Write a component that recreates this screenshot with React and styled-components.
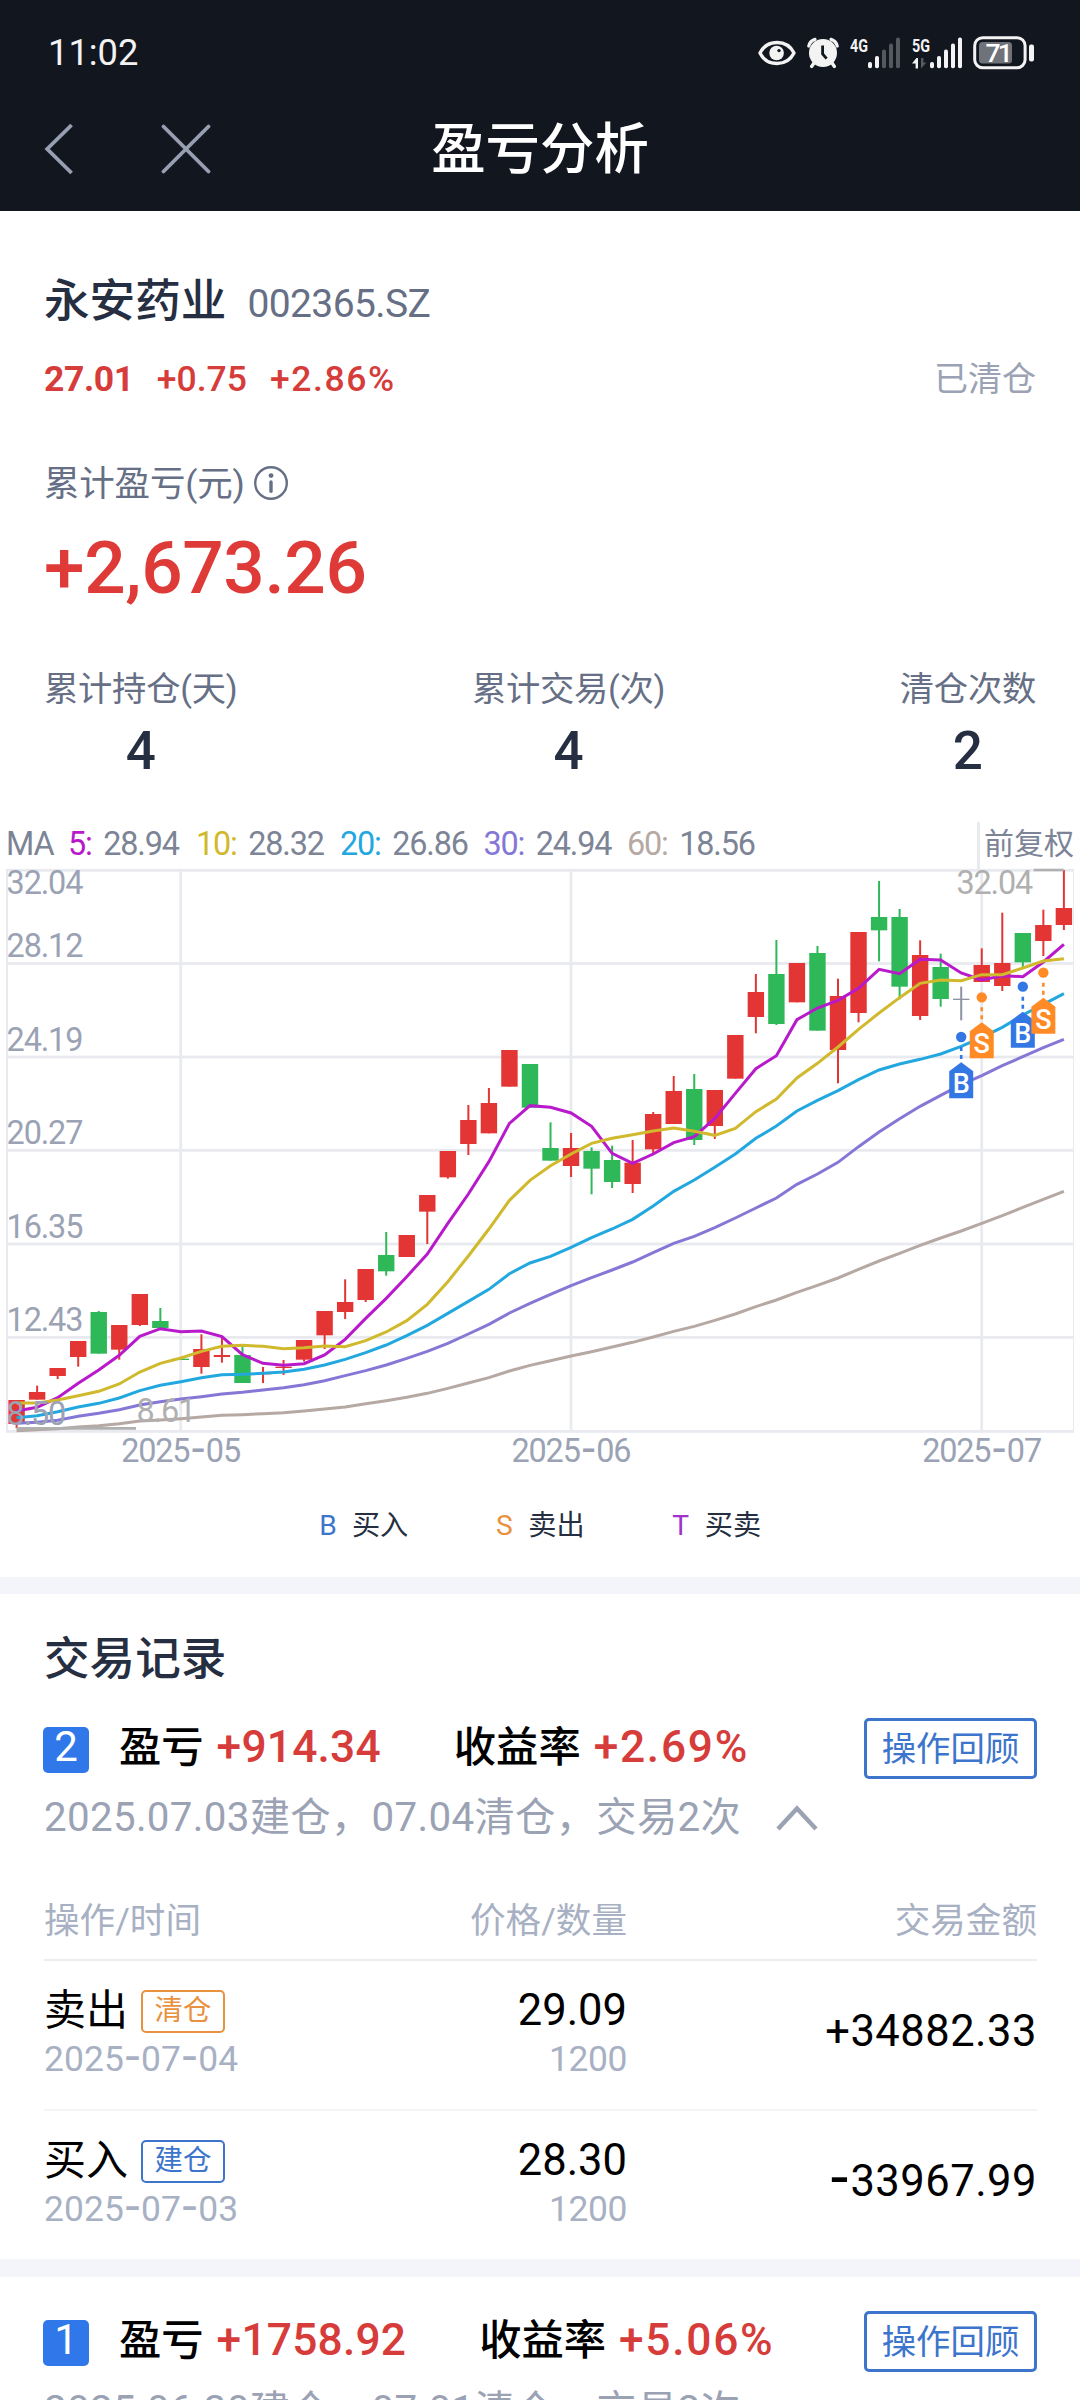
import React from 'react';
import styled, { createGlobalStyle } from 'styled-components';

const C = {
  ink: '#262f42',
  slate: '#666f85',
  mute: '#9aa2b4',
  faint: '#a8b0c3',
  red: '#e33634',
  redText: '#d63c3a',
  green: '#2fb858',
  blue: '#3078ea',
  blueText: '#3c75cb',
  orange: '#ff8a26',
  grid: '#e9eaf0',
  band: '#f4f5fa',
  ma5: '#b81acb',
  ma10: '#d0b92c',
  ma20: '#22a8df',
  ma30: '#8577d6',
  ma60: '#b6a8a2',
};

const FONT = `Roboto, 'Noto Sans CJK SC', sans-serif`;

const Global = createGlobalStyle`
  * { box-sizing: border-box; }
  body { margin: 0; background: #fff; font-family: ${FONT}; line-height: 1.2; }
`;

const Page = styled.div`
  width: 1080px;
  height: 2400px;
  overflow: hidden;
  background: #fff;
  white-space: nowrap;
`;

const Text = styled.span`
  font-size: ${(p) => p.$size}px;
  font-weight: ${(p) => p.$weight || 400};
  letter-spacing: ${(p) => p.$ls || 0}px;
  color: ${(p) => p.$color || '#000'};
`;

/* ---------- header ---------- */

const Header = styled.header`
  height: 211px;
  background: #12161f;
`;

const StatusBar = styled.div`
  display: flex;
  align-items: center;
  justify-content: space-between;
  height: 105px;
  padding: 0 45px 0 48px;
`;

const StatusIcons = styled.div`
  display: flex;
  align-items: center;
  gap: 11.3px;
`;

const NavBar = styled.nav`
  display: grid;
  grid-template-columns: 1fr auto 1fr;
  align-items: center;
  height: 87px;
  padding: 0 43px;
`;

const NavTitle = styled.h1`
  margin: 2px 0 0;
  font-size: 54.4px;
  font-weight: 500;
  color: #fff;
`;

const NavButtons = styled.div`
  display: flex;
  align-items: center;
  gap: 88px;
`;

const Eye = () => (
  <svg width="38" height="26" viewBox="0 0 38 26">
    <path d="M2 13C9 -1 29 -1 36 13C29 27 9 27 2 13Z" fill="none" stroke="#f3f3f3" strokeWidth="3.4" strokeLinejoin="round" />
    <circle cx="18.6" cy="13" r="7.3" fill="#f3f3f3" />
    <circle cx="21" cy="10.6" r="1.7" fill="#12161f" />
  </svg>
);

const Alarm = () => (
  <svg width="32" height="32" viewBox="0 0 32 32">
    <g stroke="#f3f3f3" strokeLinecap="round" fill="none">
      <path d="M1.8 9A9 9 0 0 1 8 2.4M30.2 9A9 9 0 0 0 24 2.4" strokeWidth="3.2" />
      <path d="M7 26L4.6 29.4M25 26L27.4 29.4" strokeWidth="3.4" />
    </g>
    <circle cx="16" cy="16" r="14" fill="#f3f3f3" />
    <path d="M15.6 8.4V17L19.6 21.6" fill="none" stroke="#12161f" strokeWidth="2.8" />
  </svg>
);

const Signal = ({ label, on, arrows }) => (
  <svg width="50" height="44" viewBox="0 -6 50 44">
    <text x="0" y="14.6" fontFamily="Roboto" fontWeight="700" fontSize="19" fill="#f3f3f3" textLength="18" lengthAdjust="spacingAndGlyphs">
      {label}
    </text>
    {arrows && <path d="M0 26.4L4.4 21H6V31.4H3.6V26.4Z" fill="#f3f3f3" />}
    {arrows && <path d="M9 21V31.4L14.4 25.4H11.4V21Z" fill="#55585f" />}
    {[25, 19, 12.6, 6.4, 0.4].map((y, i) => (
      <rect key={y} x={18 + 7 * i} y={y} width="4" height={31.3 - y} rx="1.8" fill={i < on ? '#f3f3f3' : '#55585f'} />
    ))}
  </svg>
);

const Battery = () => (
  <svg width="62" height="34" viewBox="0 0 62 34">
    <rect x="1.7" y="1.7" width="50.4" height="30" rx="8" fill="none" stroke="#f3f3f3" strokeWidth="3" />
    <rect x="6" y="6" width="33" height="21.4" rx="3.5" fill="#6f7278" />
    <rect x="56" y="8.4" width="5" height="17" rx="2" fill="#f3f3f3" />
    <text x="12.4" y="25.8" fontFamily="Roboto" fontWeight="500" fontSize="26.5" fill="#fff" letterSpacing="-2.6">71</text>
  </svg>
);

const Back = () => (
  <svg width="30" height="52" viewBox="0 0 30 52">
    <path d="M28.6 2L4.2 26L28.6 50" fill="none" stroke="#979fb3" strokeWidth="3.8" />
  </svg>
);

const Close = () => (
  <svg width="50" height="50" viewBox="0 0 50 50">
    <path d="M2.5 2.5L47.5 47.5M47.5 2.5L2.5 47.5" fill="none" stroke="#979fb3" strokeWidth="3.8" strokeLinecap="round" />
  </svg>
);

/* ---------- summary ---------- */

const Summary = styled.section`
  padding: 61px 44px 0 44px;
`;

const NameRow = styled.div`
  display: flex;
  align-items: baseline;
  gap: 21px;
  height: 60px;
  line-height: 60px;
`;

const PriceRow = styled.div`
  display: flex;
  align-items: center;
  gap: 23px;
  height: 50px;
  margin-top: 22px;
`;

const Status = styled(Text)`
  margin-left: auto;
`;

const LabelRow = styled.div`
  display: flex;
  align-items: center;
  gap: 8px;
  height: 50px;
  margin-top: 55px;
`;

const BigNumber = styled.div`
  height: 80px;
  margin-top: 18px;
  line-height: 82px;
  font-size: 73px;
  font-weight: 500;
  letter-spacing: -0.4px;
  color: #de3a37;
`;

const Stats = styled.div`
  display: flex;
  justify-content: space-between;
  margin-top: 60px;
`;

const Stat = styled.div`
  display: flex;
  flex-direction: column;
  align-items: center;
  gap: 9px;
`;

const StatLabel = styled(Text)`
  line-height: 44px;
`;

const StatValue = styled(Text)`
  line-height: 62px;
  height: 60px;
`;

const InfoIcon = () => (
  <svg width="36" height="36" viewBox="0 0 36 36">
    <circle cx="18" cy="17" r="15.8" fill="none" stroke={C.slate} strokeWidth="2.4" />
    <circle cx="18" cy="9.6" r="2.4" fill={C.slate} />
    <path d="M18 16V25.2" stroke={C.slate} strokeWidth="3.4" strokeLinecap="round" />
  </svg>
);

/* ---------- chart ---------- */

const MaBar = styled.div`
  display: flex;
  align-items: stretch;
  justify-content: space-between;
  height: 48px;
  margin-top: 42px;
  padding: 0 6px;
`;

const MaList = styled.div`
  display: flex;
  align-items: center;
  padding-bottom: 4px;
`;

const MaItem = styled.span`
  width: ${(p) => p.$w}px;
  font-size: 32.4px;
  letter-spacing: -1.15px;
  word-spacing: 4.5px;
  color: #7c8496;
`;

const MaKey = styled.span`
  color: ${(p) => p.$color};
`;

const Adjust = styled.div`
  display: flex;
  align-items: center;
  width: 97px;
  padding: 0 0 4px 4px;
  border-left: 3px solid ${C.grid};
  font-size: 30px;
  color: #7c8496;
`;

const ChartSvg = styled.svg`
  display: block;
  overflow: visible;
`;

const X = (i) => 16.6 + 20.535 * i;
const Y = (v) => 810 + v / 3;

/* [colour, top, bottom, high, low] */
const candles = [
  ['r', 1770, 1842, 1770, 1855], ['r', 1746, 1769, 1727, 1769], ['r', 1674, 1698, 1674, 1707], ['r', 1593, 1641, 1593, 1670],
  ['g', 1506, 1631, 1503, 1631], ['r', 1545, 1619, 1545, 1649], ['r', 1452, 1545, 1452, 1548], ['g', 1533, 1554, 1494, 1554],
  ['g', 1646, 1650, 1646, 1650], ['r', 1617, 1671, 1573, 1691], ['r', 1635, 1641, 1580, 1658], ['g', 1635, 1719, 1611, 1719],
  ['r', 1690, 1693, 1671, 1719], ['r', 1670, 1674, 1650, 1695], ['r', 1590, 1649, 1590, 1655], ['r', 1503, 1576, 1503, 1617],
  ['r', 1476, 1506, 1408, 1527], ['r', 1377, 1470, 1377, 1476], ['g', 1335, 1384, 1266, 1397], ['r', 1275, 1341, 1275, 1341],
  ['r', 1155, 1205, 1155, 1302], ['r', 1023, 1102, 1023, 1106], ['r', 930, 1002, 885, 1035], ['r', 879, 970, 834, 970],
  ['r', 720, 830, 720, 830], ['g', 762, 893, 762, 893], ['g', 1014, 1052, 937, 1052], ['r', 1014, 1068, 969, 1101],
  ['g', 1023, 1076, 1012, 1153], ['g', 1050, 1116, 1007, 1134], ['r', 1058, 1122, 990, 1149], ['r', 912, 1018, 906, 1030],
  ['r', 843, 942, 798, 942], ['g', 837, 990, 792, 1005], ['r', 840, 948, 840, 987], ['r', 675, 806, 675, 806],
  ['r', 546, 621, 492, 670], ['g', 492, 642, 390, 645], ['r', 459, 577, 459, 577], ['g', 429, 662, 408, 662],
  ['r', 558, 720, 506, 820], ['r', 366, 609, 366, 637], ['g', 321, 361, 213, 454], ['g', 321, 530, 297, 568],
  ['r', 435, 618, 391, 630], ['g', 471, 567, 431, 590], ['n', 566, 570, 530, 631], ['r', 465, 516, 415, 516],
  ['r', 459, 528, 308, 543], ['g', 369, 457, 369, 475], ['r', 345, 393, 299, 438], ['r', 294, 345, 180, 360],
];

const candleColor = { r: C.red, g: C.green, n: '#8d93a3' };

const averages = [
  { color: C.ma60, v: [1862, 1859, 1856, 1851, 1847, 1841, 1833, 1830, 1826, 1821, 1816, 1814, 1811, 1808, 1803, 1797, 1791, 1781, 1772, 1762, 1750, 1735, 1719, 1703, 1683, 1666, 1652, 1638, 1625, 1611, 1597, 1581, 1564, 1549, 1531, 1512, 1490, 1470, 1447, 1426, 1404, 1378, 1353, 1330, 1306, 1284, 1263, 1240, 1217, 1192, 1168, 1144] },
  { color: C.ma30, v: [1840, 1837, 1831, 1819, 1810, 1799, 1785, 1775, 1767, 1760, 1752, 1747, 1740, 1733, 1724, 1712, 1697, 1682, 1665, 1645, 1624, 1600, 1572, 1543, 1509, 1480, 1453, 1427, 1403, 1380, 1356, 1328, 1300, 1279, 1253, 1224, 1194, 1164, 1123, 1092, 1057, 1010, 966, 926, 889, 856, 824, 797, 767, 740, 713, 688] },
  { color: C.ma20, v: [1823, 1817, 1805, 1791, 1780, 1764, 1742, 1726, 1715, 1703, 1694, 1693, 1690, 1686, 1678, 1665, 1648, 1628, 1605, 1577, 1546, 1510, 1474, 1438, 1391, 1359, 1339, 1312, 1283, 1257, 1228, 1188, 1144, 1110, 1072, 1032, 985, 948, 903, 871, 842, 809, 780, 762, 748, 732, 709, 682, 652, 615, 583, 551] },
  { color: C.ma5, v: [1803, 1792, 1763, 1720, 1680, 1636, 1579, 1556, 1565, 1563, 1580, 1634, 1660, 1666, 1661, 1635, 1588, 1525, 1465, 1400, 1332, 1240, 1152, 1055, 940, 887, 892, 909, 949, 1030, 1060, 1032, 998, 980, 925, 850, 776, 737, 629, 594, 571, 535, 478, 491, 448, 450, 489, 510, 497, 500, 456, 403] },
  { color: C.ma10, v: [1779, 1779, 1770, 1757, 1744, 1722, 1686, 1660, 1644, 1624, 1609, 1606, 1609, 1616, 1613, 1608, 1610, 1592, 1566, 1532, 1483, 1415, 1338, 1257, 1171, 1111, 1067, 1032, 1000, 985, 974, 963, 954, 964, 976, 955, 905, 867, 804, 760, 711, 658, 609, 563, 520, 510, 512, 494, 494, 474, 453, 446] },
];

const yLabels = [['32.04', 894], ['28.12', 957], ['24.19', 1051], ['20.27', 1144], ['16.35', 1238], ['12.43', 1331], ['8.50', 1424.7]];
const months = [['05', 180.7], ['06', 571], ['07', 981.7]];
const trades = [
  { i: 46, side: 'B', dot: 681, top: 757 },
  { i: 47, side: 'S', dot: 562, top: 637 },
  { i: 49, side: 'B', dot: 530, top: 605 },
  { i: 50, side: 'S', dot: 488, top: 563 },
];

const chartText = { fontFamily: FONT, fontSize: 32.4, letterSpacing: -1.15 };

const Marker = ({ i, side, dot, top }) => {
  const x = X(i);
  const t = Y(top);
  const color = side === 'B' ? '#3377e5' : C.orange;
  return (
    <g>
      <circle cx={x} cy={Y(dot)} r="5.2" fill={color} />
      <path d={`M${x} ${Y(dot) + 10}V${t}`} stroke={color} strokeWidth="2.6" strokeDasharray="4 4" />
      <path d={`M${x} ${t}L${x + 12} ${t + 9}V${t + 36}H${x - 12}V${t + 9}Z`} fill={color} />
      <text x={x} y={t + 31} textAnchor="middle" fontFamily={FONT} fontSize="27" fontWeight="500" fill="#fff">{side}</text>
    </g>
  );
};

const Chart = () => (
  <ChartSvg width="1080" height="600" viewBox="0 870 1080 600">
    <g fill={C.grid}>
      {[870.3, 963.5, 1057, 1150.3, 1244, 1337.4, 1431.4].map((y) => (
        <rect key={y} x="6" y={y - 1.4} width="1068" height="2.8" />
      ))}
      {months.map(([m, x]) => <rect key={m} x={x - 1.4} y="870" width="2.8" height="561" />)}
      <rect x="6" y="870" width="2" height="561" />
      <rect x="1073" y="870" width="1" height="561" />
    </g>
    {candles.map(([c, top, bottom, high, low], i) => (
      <g key={i} fill={candleColor[c]}>
        <rect x={X(i) - 1} y={Y(high)} width="2" height={(low - high) / 3} />
        <rect x={X(i) - 8.2} y={Y(top)} width="16.4" height={(bottom - top) / 3} />
      </g>
    ))}
    {averages.map(({ color, v }) => (
      <polyline key={color} points={v.map((n, i) => `${X(i)},${Y(n)}`).join(' ')} fill="none" stroke={color} strokeWidth="3" />
    ))}
    <path d="M16.6 1428.4H136M1033.7 870H1063.7" stroke="#b0b0b0" strokeWidth="2.7" />
    <g {...chartText} fill="#b0b0b0">
      <text x="136.5" y="1421.7">8.61</text>
      <text x="956.4" y="894">32.04</text>
    </g>
    <g {...chartText} fill={C.mute}>
      {yLabels.map(([t, y]) => <text key={t} x="6.6" y={y}>{t}</text>)}
      {months.map(([m, x]) => (
        <text key={m} x={x - 59.5} y="1461.7">
          2025<tspan fontFamily="DejaVu Sans" fontSize="42" dx="1.2">-</tspan><tspan dx="1.2">{m}</tspan>
        </text>
      ))}
    </g>
    {trades.map((t) => <Marker key={t.i} {...t} />)}
  </ChartSvg>
);

const Legend = styled.div`
  display: flex;
  justify-content: center;
  gap: 87px;
  height: 50px;
  margin: 30px 0 27px;
  line-height: 51px;
`;

const LegendItem = styled.div`
  display: flex;
  gap: 15px;
  font-size: 28.2px;
  color: ${C.ink};
`;

const LegendKey = styled.span`
  width: 18px;
  text-align: center;
  color: ${(p) => p.$color};
`;

const Band = styled.div`
  height: ${(p) => p.$h}px;
  background: ${C.band};
`;

/* ---------- records ---------- */

const Section = styled.section`
  padding: ${(p) => p.$top}px 43px 0 44px;
`;

const SectionTitle = styled.h2`
  margin: 0 0 28px;
  font-size: 45.6px;
  font-weight: 500;
  line-height: 60px;
  color: ${C.ink};
`;

const RecordHead = styled.div`
  display: flex;
  align-items: center;
  height: 61px;
`;

const Badge = styled.span`
  width: 46px;
  height: 46px;
  margin: 3px 30px 0 -1px;
  border-radius: 5px;
  background: ${C.blue};
  color: #fff;
  font-size: 42px;
  line-height: 39px;
  text-align: center;
`;

const Metric = styled.div`
  display: flex;
  align-items: center;
  gap: 13px;
  margin-right: 73px;
  padding-bottom: 1px;
`;

const ReviewButton = styled.button`
  width: 173px;
  height: 61px;
  margin-left: auto;
  padding: 0;
  border: 3px solid ${C.blueText};
  border-radius: 5px;
  background: #fff;
  color: ${C.blueText};
  font-family: inherit;
  font-size: 34.4px;
  line-height: 56px;
`;

const Period = styled.div`
  display: flex;
  align-items: center;
  gap: 35px;
  height: 56px;
  margin-top: 11px;
  font-size: 40.3px;
  letter-spacing: 0.33px;
  color: ${C.mute};
`;

const Grid = styled.div`
  display: grid;
  grid-template-columns: 290px 293px 410px;
  align-items: center;
`;

const TableHead = styled(Grid)`
  height: 65px;
  margin-top: 50px;
  padding-bottom: 13px;
  border-bottom: 2px solid #ededf1;
  font-size: 35.6px;
  color: ${C.faint};
`;

const TableRow = styled(Grid)`
  height: ${(p) => (p.$last ? 148 : 150)}px;
  padding-bottom: 5px;
  border-bottom: ${(p) => (p.$last ? '0' : '2px')} solid #f3f4f6;
`;

const Cell = styled.div`
  display: flex;
  flex-direction: column;
  align-items: ${(p) => (p.$end ? 'flex-end' : 'flex-start')};
  gap: 3px;
`;

const Line = styled.div`
  display: flex;
  align-items: center;
  gap: 13px;
  height: ${(p) => p.$h}px;
`;

const Tag = styled.span`
  width: 84px;
  height: 43px;
  margin-top: 1px;
  border: 2px solid ${(p) => p.$color};
  border-radius: 5px;
  color: ${(p) => p.$color};
  font-size: 28.4px;
  line-height: 38px;
  text-align: center;
`;

const Right = styled.div`
  text-align: right;
`;

const Dash = styled.span`
  font-family: 'DejaVu Sans', sans-serif;
  font-size: 1.33em;
  line-height: 0;
`;

const Chevron = ({ open }) => (
  <svg width="42" height="28" viewBox="0 0 42 28">
    <path d={open ? 'M2 25L21 4.5L40 25' : 'M2 7L21 27L40 7'} fill="none" stroke={C.mute} strokeWidth="4.4" />
  </svg>
);

const Dashed = ({ children }) =>
  children.split('-').map((part, i) => (
    <React.Fragment key={i}>
      {i > 0 && <Dash>-</Dash>}
      {part}
    </React.Fragment>
  ));

const Record = ({ no, profit, rate, period, open }) => (
  <>
    <RecordHead>
      <Badge>{no}</Badge>
      <Metric>
        <Text $size={42.3} $weight={500}>盈亏</Text>
        <Text $size={44.3} $weight={500} $ls={0.2} $color={C.redText}>{profit}</Text>
      </Metric>
      <Metric>
        <Text $size={42.3} $weight={500}>收益率</Text>
        <Text $size={44.3} $weight={500} $ls={1.7} $color={C.redText}>{rate}</Text>
      </Metric>
      <ReviewButton>操作回顾</ReviewButton>
    </RecordHead>
    <Period>
      <span>{period}</span>
      <Chevron open={open} />
    </Period>
  </>
);

const Trade = ({ side, tag, color, date, price, qty, amount, last }) => (
  <TableRow $last={last}>
    <Cell>
      <Line $h={50}>
        <Text $size={42}>{side}</Text>
        <Tag $color={color}>{tag}</Tag>
      </Line>
      <Line $h={40}>
        <Text $size={35.4} $ls={0.1} $color={C.faint}><Dashed>{date}</Dashed></Text>
      </Line>
    </Cell>
    <Cell $end>
      <Line $h={50}><Text $size={43.5}>{price}</Text></Line>
      <Line $h={40}><Text $size={35.4} $ls={-0.4} $color={C.faint}>{qty}</Text></Line>
    </Cell>
    <Right><Text $size={43.5} $ls={0.5}><Dashed>{amount}</Dashed></Text></Right>
  </TableRow>
);

const stats = [['累计持仓(天)', '4'], ['累计交易(次)', '4'], ['清仓次数', '2']];
const maItems = [
  ['5:', '28.94', C.ma5, 128],
  ['10:', '28.32', C.ma10, 144],
  ['20:', '26.86', C.ma20, 143.5],
  ['30:', '24.94', C.ma30, 143.5],
  ['60:', '18.56', C.ma60, 144],
];

export default function App() {
  return (
    <Page>
      <Global />
      <Header>
        <StatusBar>
          <Text $size={36.3} $color="#f3f3f3">11:02</Text>
          <StatusIcons>
            <Eye />
            <Alarm />
            <Signal label="4G" on={2} />
            <Signal label="5G" on={5} arrows />
            <Battery />
          </StatusIcons>
        </StatusBar>
        <NavBar>
          <NavButtons>
            <Back />
            <Close />
          </NavButtons>
          <NavTitle>盈亏分析</NavTitle>
        </NavBar>
      </Header>

      <Summary>
        <NameRow>
          <Text $size={45.6} $weight={500} $color={C.ink}>永安药业</Text>
          <Text $size={39} $ls={-0.6} $color={C.slate}>002365.SZ</Text>
        </NameRow>
        <PriceRow>
          <Text $size={35.5} $weight={700} $ls={-0.4} $color={C.redText}>27.01</Text>
          <Text $size={35.5} $weight={500} $color={C.redText}>+0.75</Text>
          <Text $size={35.5} $weight={500} $ls={1.6} $color={C.redText}>+2.86%</Text>
          <Status $size={34} $color={C.mute}>已清仓</Status>
        </PriceRow>
        <LabelRow>
          <Text $size={35.5} $ls={-0.2} $color={C.slate}>累计盈亏(元)</Text>
          <InfoIcon />
        </LabelRow>
        <BigNumber>+2,673.26</BigNumber>
        <Stats>
          {stats.map(([label, value]) => (
            <Stat key={label}>
              <StatLabel $size={34.3} $ls={-0.25} $color={C.slate}>{label}</StatLabel>
              <StatValue $size={53} $weight={500} $color={C.ink}>{value}</StatValue>
            </Stat>
          ))}
        </Stats>
      </Summary>

      <MaBar>
        <MaList>
          <MaItem $w={62}>MA</MaItem>
          {maItems.map(([k, v, color, w]) => (
            <MaItem key={k} $w={w}><MaKey $color={color}>{k}</MaKey> {v}</MaItem>
          ))}
        </MaList>
        <Adjust>前复权</Adjust>
      </MaBar>
      <Chart />
      <Legend>
        <LegendItem><LegendKey $color={C.blueText}>B</LegendKey>买入</LegendItem>
        <LegendItem><LegendKey $color="#e8913f">S</LegendKey>卖出</LegendItem>
        <LegendItem><LegendKey $color="#a033c9">T</LegendKey>买卖</LegendItem>
      </Legend>

      <Band $h={17} />
      <Section $top={36}>
        <SectionTitle>交易记录</SectionTitle>
        <Record no="2" profit="+914.34" rate="+2.69%" period="2025.07.03建仓，07.04清仓，交易2次" open />
        <TableHead>
          <span>操作/时间</span>
          <Right>价格/数量</Right>
          <Right>交易金额</Right>
        </TableHead>
        <Trade side="卖出" tag="清仓" color="#e8913f" date="2025-07-04" price="29.09" qty="1200" amount="+34882.33" />
        <Trade side="买入" tag="建仓" color={C.blueText} date="2025-07-03" price="28.30" qty="1200" amount="-33967.99" last />
      </Section>
      <Band $h={18} />
      <Section $top={34}>
        <Record no="1" profit="+1758.92" rate="+5.06%" period="2025.06.30建仓，07.01清仓，交易2次" />
      </Section>
    </Page>
  );
}
